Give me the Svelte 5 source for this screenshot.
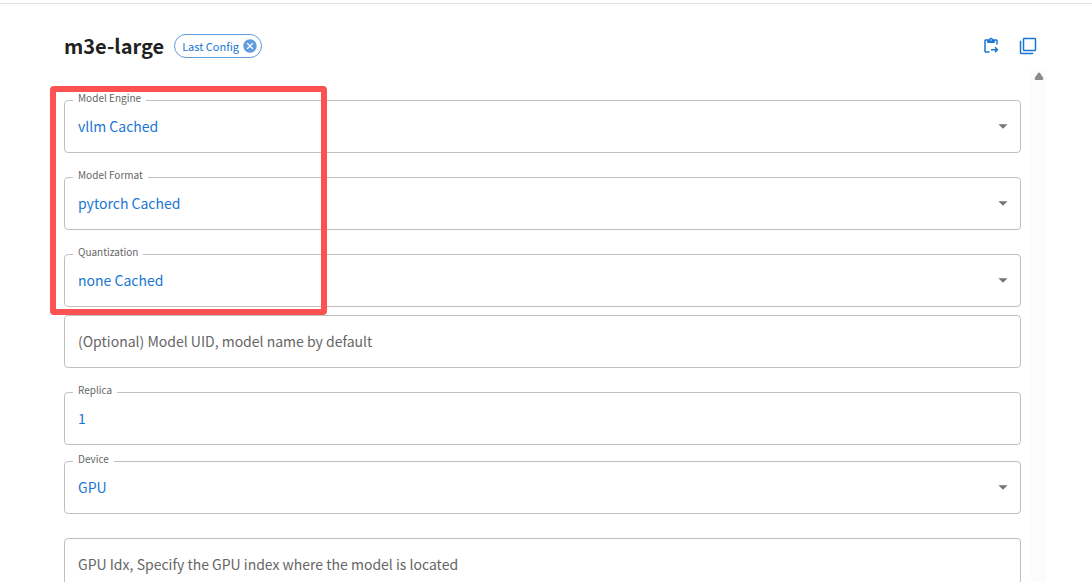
<script>

	let title = "m3e-large";
	let show_chip = true;
	let uid = "";
	let replica = "1";
	let gpu_idx = "";

	let engine_fields = [
		{id: "engine", label: "Model Engine", value: "vllm Cached", options: ["vllm Cached"]},
		{id: "format", label: "Model Format", value: "pytorch Cached", options: ["pytorch Cached"]},
		{id: "quantization", label: "Quantization", value: "none Cached", options: ["none Cached"]}
	];

	let device = "GPU";
	let devices = ["GPU", "CPU"];

	function remove_chip(){
		show_chip = false;
	}

	function copy_title(){
		navigator.clipboard.writeText(title);
	}

</script>

<div class="page">
	<header>
		<h1>{title}</h1>
		{#if show_chip}
			<div class="chip">
				<span>Last Config</span>
				<button type="button" aria-label="Remove last config" on:click={remove_chip}>
					<svg viewBox="0 0 24 24" width="16" height="16">
						<path d="M12 2C6.47 2 2 6.47 2 12s4.47 10 10 10 10-4.47 10-10S17.53 2 12 2zm5 13.59L15.59 17 12 13.41 8.41 17 7 15.59 10.59 12 7 8.41 8.41 7 12 10.59 15.59 7 17 8.41 13.41 12 17 15.59z" />
					</svg>
				</button>
			</div>
		{/if}
		<div class="actions">
			<button type="button" aria-label="Paste command">
				<svg viewBox="0 0 24 24" width="18" height="18">
					<path d="M5 5h2v3h10V5h2v5h2V5c0-1.1-.9-2-2-2h-4.18C14.4 1.84 13.3 1 12 1s-2.4.84-2.82 2H5c-1.1 0-2 .9-2 2v14c0 1.1.9 2 2 2h5v-2H5V5zm7-2c.55 0 1 .45 1 1s-.45 1-1 1-1-.45-1-1 .45-1 1-1z" />
					<path d="M18.01 13l-1.42 1.41 1.58 1.58H12v2h6.17l-1.58 1.59L18.01 21 22 16.99z" />
				</svg>
			</button>
			<button type="button" aria-label="Copy" on:click={copy_title}>
				<svg viewBox="0 0 24 24" width="18" height="18">
					<path d="M3 5H1v16c0 1.1.9 2 2 2h16v-2H3V5zm18-4H7c-1.1 0-2 .9-2 2v14c0 1.1.9 2 2 2h14c1.1 0 2-.9 2-2V3c0-1.1-.9-2-2-2zm0 16H7V3h14v14z" />
				</svg>
			</button>
		</div>
	</header>

	<div class="body">
		<form>
			<div class="group">
				{#each engine_fields as field}
					<div class="field">
						<label for={field.id}>{field.label}</label>
						<select id={field.id} bind:value={field.value}>
							{#each field.options as option}
								<option>{option}</option>
							{/each}
						</select>
						<svg class="arrow" viewBox="0 0 24 24" width="22" height="22"><path d="M7 10l5 5 5-5z" /></svg>
					</div>
				{/each}
				<div class="highlight"></div>
			</div>

			<div class="field tight">
				<input type="text" aria-label="Model UID" placeholder="(Optional) Model UID, model name by default" bind:value={uid} />
			</div>

			<div class="field">
				<label for="replica">Replica</label>
				<input id="replica" type="text" inputmode="numeric" bind:value={replica} />
			</div>

			<div class="field close">
				<label for="device">Device</label>
				<select id="device" bind:value={device}>
					{#each devices as option}
						<option>{option}</option>
					{/each}
				</select>
				<svg class="arrow" viewBox="0 0 24 24" width="22" height="22"><path d="M7 10l5 5 5-5z" /></svg>
			</div>

			<div class="field">
				<input type="text" aria-label="GPU Idx" placeholder="GPU Idx, Specify the GPU index where the model is located" bind:value={gpu_idx} />
			</div>
		</form>

		<div class="scrollbar">
			<svg viewBox="0 0 10 8" width="10" height="8"><path d="M4 1Q5 0 6 1L9 5.500Q10 8 8 8H2Q0 8 1 5.500z" /></svg>
		</div>
	</div>
</div>

<style>
	:global(body){
		margin:0;
		background-color:white;
	}

	.page{
		box-sizing:border-box;
		height:100vh;
		padding:30px 46px 0 64px;
		display:flex;
		flex-direction:column;
		overflow:hidden;
		position:relative;
		font-family:"Noto Sans CJK SC", "Noto Sans", sans-serif;
		color:rgb(33,33,33);
	}

	/* divider under the app bar */
	.page::before{
		content:"";
		position:absolute;
		top:3px;
		left:0;
		right:0;
		height:1px;
		background-color:rgb(224,224,224);
	}

	header{
		display:flex;
		align-items:center;
		height:32px;
		padding-right:9px;
	}

	h1{
		margin:0;
		font-size:20px;
		line-height:32px;
		font-weight:700;
	}

	.chip{
		box-sizing:border-box;
		display:flex;
		align-items:center;
		gap:3px;
		height:24px;
		margin-left:10px;
		padding:0 3px 0 7px;
		border:1px solid rgb(94,157,222);
		border-radius:12px;
		font-size:11px;
		color:rgb(25,118,210);
	}

	button{
		display:flex;
		padding:0;
		border:none;
		background:none;
		cursor:pointer;
	}

	.chip button{
		fill:rgb(94,157,222);
	}

	.actions{
		display:flex;
		gap:19px;
		margin-left:auto;
		fill:rgb(25,118,210);
	}

	.body{
		flex:1;
		min-height:0;
		display:flex;
		gap:10px;
		padding-top:6px;
	}

	form{
		flex:1;
		padding-top:8px;
	}

	.group{
		position:relative;
	}

	.field{
		box-sizing:border-box;
		position:relative;
		height:53px;
		margin-top:24px;
		border:1px solid rgb(192,192,192);
		border-radius:4px;
	}

	.field.tight{
		margin-top:8px;
	}

	.field.close{
		margin-top:16px;
	}

	.field label{
		position:absolute;
		top:-11px;
		left:8px;
		padding:0 5px;
		background-color:white;
		font-size:10px;
		line-height:16px;
		color:rgb(102,102,102);
	}

	.field input,
	.field select{
		box-sizing:border-box;
		display:block;
		width:100%;
		height:100%;
		margin:0;
		padding:0 32px 2px 13px;
		border:none;
		border-radius:4px;
		outline:none;
		appearance:none;
		background:none;
		font-family:inherit;
		font-size:14px;
		color:rgb(25,118,210);
	}

	.field input::placeholder{
		color:rgb(102,102,102);
		opacity:1;
	}

	.arrow{
		position:absolute;
		top:14px;
		right:6px;
		fill:rgb(117,117,117);
		pointer-events:none;
	}

	/* red frame round the three engine settings */
	.highlight{
		box-sizing:border-box;
		position:absolute;
		top:-14px;
		bottom:-8px;
		left:-14px;
		width:277px;
		border:6px solid rgb(252,82,82);
		border-radius:4px;
		pointer-events:none;
	}

	.scrollbar{
		width:15px;
		background-color:rgb(252,252,252);
		display:flex;
		justify-content:center;
		padding-top:4px;
		fill:rgb(139,139,139);
	}
</style>
